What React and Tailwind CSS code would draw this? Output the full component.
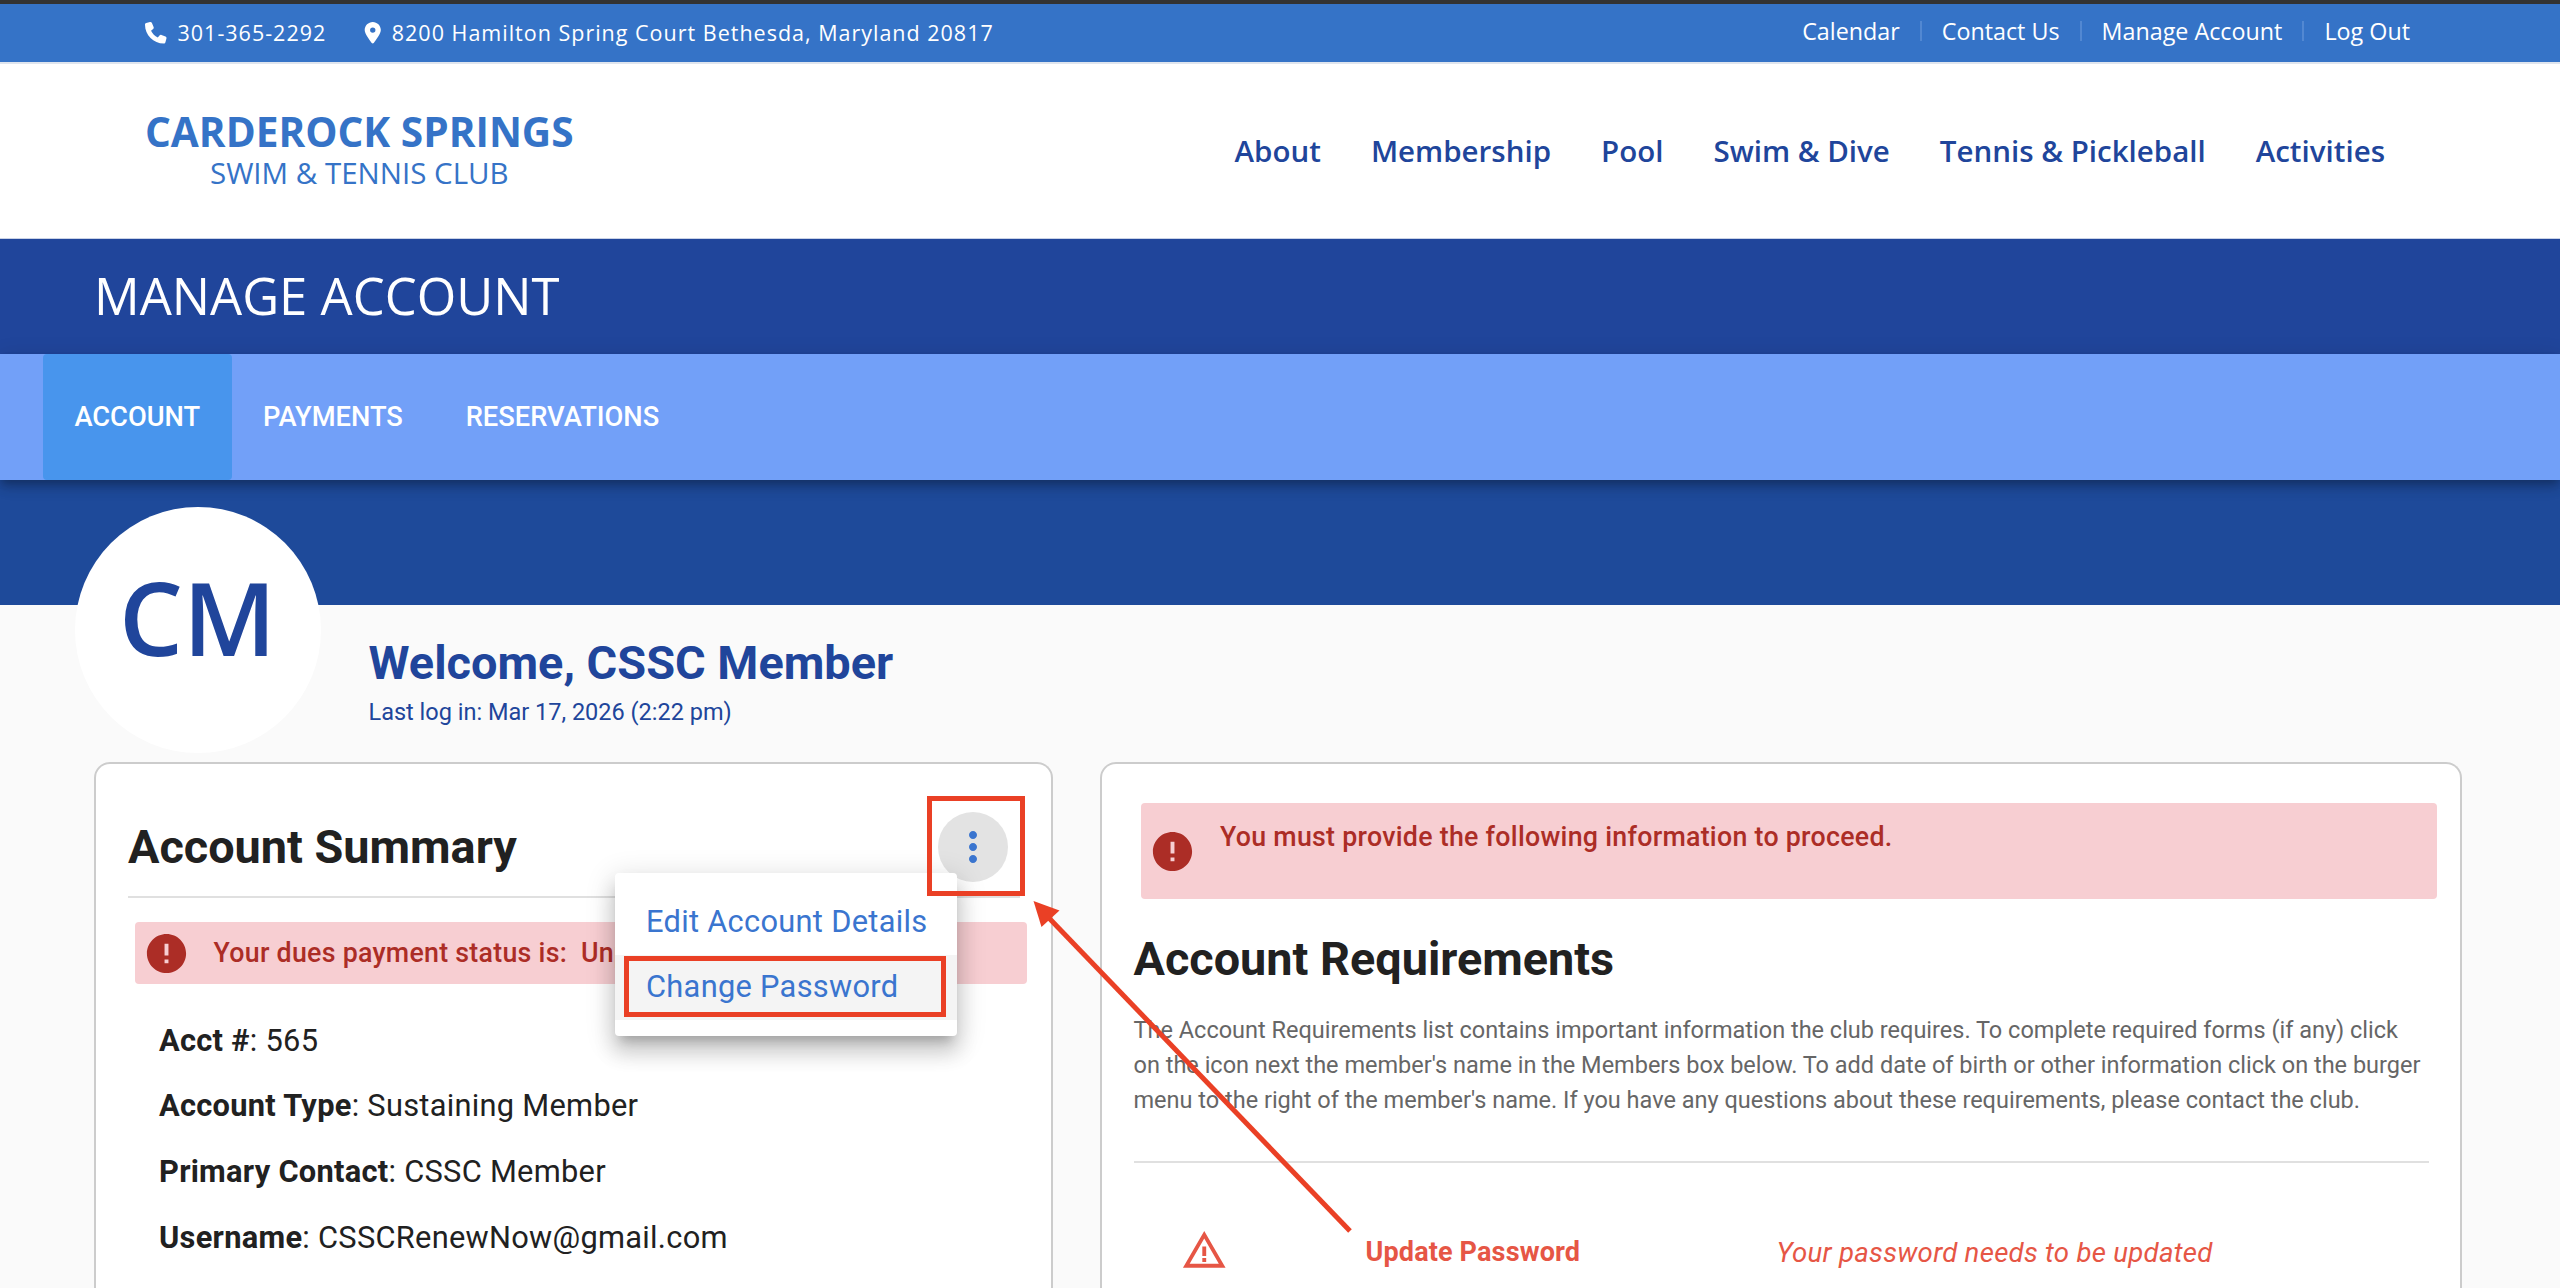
import { FaPhone, FaLocationDot } from "react-icons/fa6";
import { MdError, MdMoreVert, MdWarningAmber } from "react-icons/md";

const topLinks = ["Calendar", "Contact Us", "Manage Account", "Log Out"];
const mainNav = ["About", "Membership", "Pool", "Swim & Dive", "Tennis & Pickleball", "Activities"];
const tabs = ["ACCOUNT", "PAYMENTS", "RESERVATIONS"];

const details = [
  { label: "Acct #", value: "565" },
  { label: "Account Type", value: "Sustaining Member" },
  { label: "Primary Contact", value: "CSSC Member" },
  { label: "Username", value: "CSSCRenewNow@gmail.com" },
];

function TopBar() {
  return (
    <div className="flex h-[62px] items-center justify-between border-t-4 border-[#333333] bg-[#3573c7] pl-[145px] pr-[150px] text-white">
      <div className="flex items-center text-[21.5px] tracking-[1px]">
        <FaPhone className="size-[21.5px]" />
        <span className="ml-[11px]">301-365-2292</span>
        <FaLocationDot className="ml-[36px] size-[21.5px]" />
        <span className="ml-2">8200 Hamilton Spring Court Bethesda, Maryland 20817</span>
      </div>
      <div className="flex items-center pb-1 text-[23.3px]">
        {topLinks.map((link, i) => (
          <div key={link} className="flex items-center">
            {i > 0 && <span className="mx-5 h-5 w-0.5 bg-[#5288d2]" />}
            <a>{link}</a>
          </div>
        ))}
      </div>
    </div>
  );
}

function Header() {
  return (
    <header className="flex h-[177px] items-center justify-between border-t-2 border-b border-t-[#dfe5ee] border-b-[#c9d2e6] bg-white pt-px pl-[145px] pr-[175px]">
      <div className="flex flex-col items-center text-[#3573c7]">
        <span className="text-[40.6px] leading-[41px] font-bold">CARDEROCK SPRINGS</span>
        <span className="text-[29.5px] leading-[41px]">SWIM &amp; TENNIS CLUB</span>
      </div>
      <nav className="flex gap-[50px] text-[29.5px] font-semibold text-[#20459b]">
        {mainNav.map((item) => (
          <a key={item}>{item}</a>
        ))}
      </nav>
    </header>
  );
}

function Tabs() {
  return (
    <nav className="relative z-10 flex h-[126px] bg-[#72a0f8] pl-[43px] font-['Roboto',sans-serif] text-[27.3px] font-medium text-white shadow-[0_4px_8px_-2px_rgba(0,0,0,0.2),0_8px_10px_0_rgba(0,0,0,0.14),0_2px_20px_0_rgba(0,0,0,0.12)]">
      {tabs.map((tab, i) => (
        <a key={tab} className={`flex items-center rounded px-[31.4px] ${i === 0 ? "bg-[#4895ed]" : ""}`}>
          {tab}
        </a>
      ))}
    </nav>
  );
}

function Profile() {
  return (
    <section className="-mt-[98px] flex pl-[74.5px] text-[#20459b]">
      <div className="flex size-[246px] items-center justify-center rounded-full bg-white pb-6 font-['Open_Sans',sans-serif] text-[101px] font-semibold">
        CM
      </div>
      <div className="ml-12 pt-[126px]">
        <h2 className="text-[46.9px] leading-[60px] font-bold">Welcome, CSSC Member</h2>
        <p className="text-[23.5px] leading-[38px]">Last log in: Mar 17, 2026 (2:22 pm)</p>
      </div>
    </section>
  );
}

function ActionMenu() {
  return (
    <div className="absolute top-[109px] right-[94px] w-[342px] rounded bg-white py-4 text-[30.8px] tracking-[0.29px] whitespace-nowrap text-[#3a75cf] shadow-[0_10px_10px_-6px_rgba(0,0,0,0.2),0_16px_20px_2px_rgba(0,0,0,0.14),0_6px_28px_4px_rgba(0,0,0,0.12)]">
      <div className="flex h-[65.5px] items-center px-[31px]">Edit Account Details</div>
      <div className="relative flex h-[65.5px] items-center bg-[#f4f4f4] px-[31px]">
        Change Password
        <div className="absolute top-px left-[9px] h-[61.5px] w-[322px] border-[5px] border-[#ea4025]" />
      </div>
    </div>
  );
}

function AccountSummary() {
  return (
    <section className="relative w-[959px] rounded-t-2xl border-2 border-b-0 border-[#cccccc] bg-white pt-12 pr-6 pl-8">
      <div className="mr-[7px] flex h-[86px] items-center justify-between border-b-2 border-[#e0e0e0] pb-3.5">
        <h2 className="text-[46.8px] font-bold">Account Summary</h2>
        <button className="mr-3 flex size-[70px] items-center justify-center rounded-full bg-[#e3e3e3] text-[#3a75cf]">
          <MdMoreVert className="size-12" />
        </button>
      </div>
      <div className="mt-6 ml-[7px] flex h-[62px] items-center rounded bg-[#f7ced2] pl-2 text-[26.75px] font-medium tracking-[0.28px] text-[#ac2d26]">
        <MdError className="size-[47px]" />
        <span className="ml-[23.5px] whitespace-pre">{"Your dues payment status is:  Unpaid"}</span>
      </div>
      <dl className="mt-6 ml-[31px] text-[30.8px] tracking-[0.28px]">
        {details.map((row) => (
          <div key={row.label} className="flex h-[65.7px] items-center whitespace-pre">
            <dt className="font-bold">{row.label}</dt>
            <dd>: {row.value}</dd>
          </div>
        ))}
      </dl>
      <ActionMenu />
      <div className="absolute top-8 right-[26px] h-[100px] w-[98px] border-[5px] border-[#ea4025]" />
    </section>
  );
}

function AccountRequirements() {
  return (
    <section className="w-[1362px] rounded-t-2xl border-2 border-b-0 border-[#cccccc] bg-white pt-[39px] pr-[31px] pl-[31.5px]">
      <div className="-mr-2 ml-[7.5px] flex h-[95.5px] items-start rounded bg-[#f7ced2] pl-2 text-[26.75px] font-medium tracking-[0.28px] text-[#ac2d26]">
        <MdError className="mt-[25px] size-[47px]" />
        <span className="mt-4 ml-6 leading-9">You must provide the following information to proceed.</span>
      </div>
      <h2 className="mt-[29px] text-[46.8px] leading-[62px] font-bold">Account Requirements</h2>
      <p className="mt-[23.5px] text-[23.5px] leading-[35.2px] whitespace-nowrap text-[#666666]">
        The Account Requirements list contains important information the club requires. To complete required forms (if any) click
        <br />
        on the icon next the member's name in the Members box below. To add date of birth or other information click on the burger
        <br />
        menu to the right of the member's name. If you have any questions about these requirements, please contact the club.
      </p>
      <hr className="mt-[42px] border-t-2 border-[#e0e0e0]" />
      <div className="mt-[64px] flex h-[52px] items-center text-[#e65645]">
        <div className="w-[232px] pb-1 pl-[47px]">
          <MdWarningAmber className="size-[46.5px]" />
        </div>
        <div className="w-[411px] text-[27px] font-bold tracking-[0.15px]">Update Password</div>
        <div className="text-[27.6px] tracking-[0.27px] italic">Your password needs to be updated</div>
      </div>
    </section>
  );
}

function Arrow() {
  return (
    <svg className="pointer-events-none absolute top-[895px] left-[1025px] h-[345px] w-[335px]" viewBox="1025 895 335 345">
      <line x1="1048" y1="917" x2="1350" y2="1231" stroke="#ea4025" strokeWidth="5" />
      <polygon points="1033.5,901 1059.5,910.5 1041.5,927" fill="#ea4025" />
    </svg>
  );
}

export default function App() {
  return (
    <main className="relative h-[1288px] w-[2560px] overflow-hidden bg-[#fafafa] font-['Open_Sans',sans-serif]">
      <TopBar />
      <Header />
      <div className="flex h-[115px] items-center bg-[#20459b] pl-[94px] text-[50.8px] text-white">MANAGE ACCOUNT</div>
      <Tabs />
      <div className="h-[125px] bg-[#1e4a9a]" />
      <div className="font-['Roboto',sans-serif] text-[#212121]">
        <Profile />
        <div className="mt-[9px] flex h-[540px] gap-[47px] pl-[94px]">
          <AccountSummary />
          <AccountRequirements />
        </div>
      </div>
      <Arrow />
    </main>
  );
}
